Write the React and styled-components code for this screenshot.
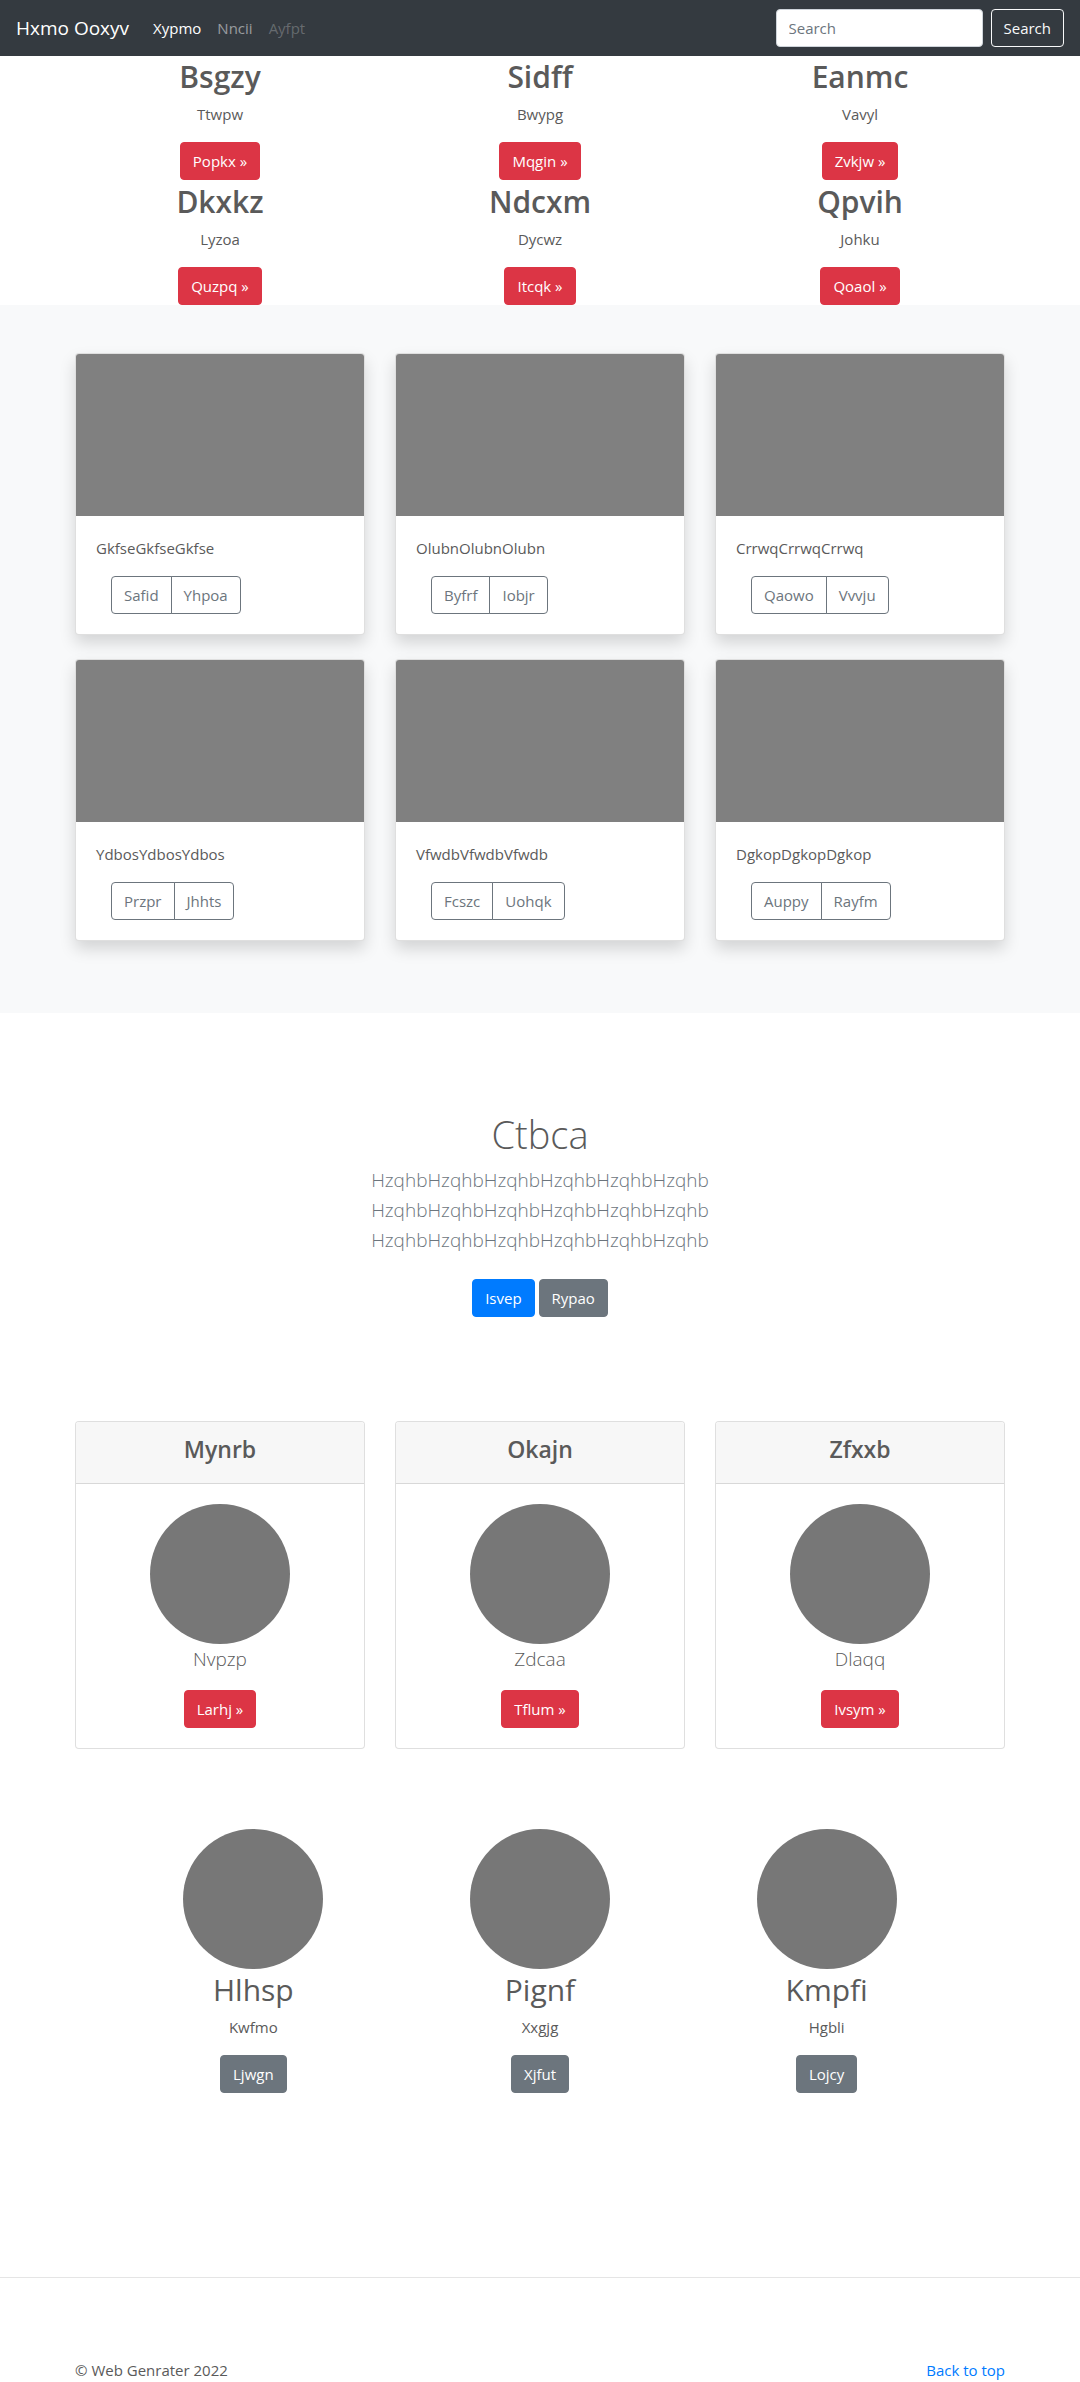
import React from "react";
import styled, { createGlobalStyle, css } from "styled-components";

const GlobalStyle = createGlobalStyle`
  *, *::before, *::after { box-sizing: border-box; }
  body {
    margin: 0;
    background: #fff;
    color: #5a5a5a;
    font-family: "Open Sans", "Noto Sans", sans-serif;
    font-size: 15px;
    line-height: 24px;
  }
  h1, h2, h3, p { margin: 0; }
  a { color: #007bff; text-decoration: none; }
`;

const tones = {
  danger: css`background: #dc3545; border-color: #dc3545; color: #fff;`,
  primary: css`background: #007bff; border-color: #007bff; color: #fff;`,
  secondary: css`background: #6c757d; border-color: #6c757d; color: #fff;`,
  outlineLight: css`background: transparent; border-color: #f8f9fa; color: #f8f9fa;`,
  outlineSecondary: css`background: transparent; border-color: #6c757d; color: #6c757d;`,
};

const buttonBase = css`
  display: inline-block;
  padding: 6px 12px;
  border: 1px solid transparent;
  border-radius: 4px;
  font: inherit;
  line-height: 24px;
  text-align: center;
  white-space: nowrap;
  cursor: pointer;
  ${({ $tone }) => tones[$tone]}
`;

const Button = styled.button`${buttonBase}`;
const ButtonLink = styled.a`${buttonBase}`;

const Navbar = styled.header`
  display: flex;
  align-items: center;
  justify-content: space-between;
  padding: 8px 16px;
  min-height: 56px;
  background: #343a40;
`;

const NavGroup = styled.nav`
  display: flex;
  align-items: center;
`;

const Brand = styled.a`
  margin-right: 16px;
  color: #fff;
  font-size: 19px;
  line-height: 30px;
`;

const NavLink = styled.a`
  padding: 8px;
  color: ${({ $state }) =>
    $state === "active" ? "#fff" : $state === "disabled" ? "rgba(255,255,255,.25)" : "rgba(255,255,255,.5)"};
`;

const SearchForm = styled.form`
  display: flex;
  align-items: center;
  gap: 8px;
`;

const SearchInput = styled.input`
  width: 207px;
  height: 38px;
  padding: 6px 12px;
  border: 1px solid #ced4da;
  border-radius: 4px;
  background: #fff;
  color: #495057;
  font: inherit;
  &::placeholder { color: #6c757d; opacity: 1; }
`;

const Container = styled.div`
  max-width: 960px;
  margin: 0 auto;
  padding: 0 ${({ $inset = 15 }) => $inset}px;
`;

const Columns = styled.div`
  display: grid;
  grid-template-columns: repeat(3, minmax(0, 1fr));
  gap: ${({ $gap = "0" }) => $gap};
`;

const Feature = styled.article`
  display: flex;
  flex-direction: column;
  align-items: center;
  text-align: center;
`;

const FeatureTitle = styled.h2`
  margin-bottom: 4px;
  font-size: 30px;
  font-weight: ${({ $weight }) => $weight};
  line-height: 42px;
`;

const Text = styled.p`
  margin-bottom: 16px;
`;

const Album = styled.section`
  padding: 48px 0 72px;
  background: #f8f9fa;
`;

const Card = styled.article`
  border: 1px solid rgba(0, 0, 0, 0.125);
  border-radius: 4px;
  background: #fff;
  overflow: hidden;
  box-shadow: ${({ $raised }) => ($raised ? "0 8px 16px rgba(0, 0, 0, 0.15)" : "none")};
`;

const CardImage = styled.div`
  aspect-ratio: 16 / 9;
  background: #808080;
`;

const CardBody = styled.div`
  padding: 20px;
`;

const ButtonGroup = styled.div`
  display: flex;
  padding-left: 15px;

  ${Button}:first-child {
    border-top-right-radius: 0;
    border-bottom-right-radius: 0;
  }
  ${Button}:last-child {
    margin-left: -1px;
    border-top-left-radius: 0;
    border-bottom-left-radius: 0;
  }
`;

const Hero = styled.section`
  display: flex;
  flex-direction: column;
  align-items: center;
  padding: 96px 15px 104px;
  text-align: center;
`;

const HeroTitle = styled.h1`
  margin-bottom: 6px;
  font-size: 38px;
  font-weight: 300;
  line-height: 50px;
`;

const Lead = styled.p`
  font-size: 19px;
  font-weight: 300;
  line-height: 30px;
  color: ${({ $muted }) => ($muted ? "#6c757d" : "inherit")};
`;

const HeroActions = styled.div`
  display: flex;
  gap: 4px;
  margin-top: 24px;
`;

const CardHeader = styled.header`
  padding: 12px 20px 18px;
  border-bottom: 1px solid rgba(0, 0, 0, 0.125);
  background: #f7f7f7;
  text-align: center;
`;

const CardTitle = styled.h3`
  font-size: 23px;
  font-weight: 600;
  line-height: 31px;
`;

const PlanBody = styled(CardBody)`
  display: flex;
  flex-direction: column;
  align-items: center;

  ${Lead} { margin-bottom: 16px; }
`;

const Avatar = styled.div`
  width: 140px;
  height: 140px;
  border-radius: 50%;
  background: #777;
`;

const Team = styled.section`
  padding: 80px 0 184px;
`;

const Footer = styled.footer`
  padding-top: 80px;
  border-top: 1px solid rgba(0, 0, 0, 0.1);
`;

const FooterRow = styled.div`
  display: flex;
  justify-content: space-between;
`;

const features = [
  ["Bsgzy", "Ttwpw", "Popkx"],
  ["Sidff", "Bwypg", "Mqgin"],
  ["Eanmc", "Vavyl", "Zvkjw"],
  ["Dkxkz", "Lyzoa", "Quzpq"],
  ["Ndcxm", "Dycwz", "Itcqk"],
  ["Qpvih", "Johku", "Qoaol"],
];

const albumCards = [
  ["GkfseGkfseGkfse", "Safid", "Yhpoa"],
  ["OlubnOlubnOlubn", "Byfrf", "Iobjr"],
  ["CrrwqCrrwqCrrwq", "Qaowo", "Vvvju"],
  ["YdbosYdbosYdbos", "Przpr", "Jhhts"],
  ["VfwdbVfwdbVfwdb", "Fcszc", "Uohqk"],
  ["DgkopDgkopDgkop", "Auppy", "Rayfm"],
];

const heroLines = Array(3).fill("HzqhbHzqhbHzqhbHzqhbHzqhbHzqhb");

const plans = [
  ["Mynrb", "Nvpzp", "Larhj"],
  ["Okajn", "Zdcaa", "Tflum"],
  ["Zfxxb", "Dlaqq", "Ivsym"],
];

const team = [
  ["Hlhsp", "Kwfmo", "Ljwgn"],
  ["Pignf", "Xxgjg", "Xjfut"],
  ["Kmpfi", "Hgbli", "Lojcy"],
];

export default function App() {
  return (
    <>
      <GlobalStyle />
      <Navbar id="top">
        <NavGroup>
          <Brand href="#">Hxmo Ooxyv</Brand>
          <NavLink href="#" $state="active">Xypmo</NavLink>
          <NavLink href="#">Nncii</NavLink>
          <NavLink href="#" $state="disabled" aria-disabled="true">Ayfpt</NavLink>
        </NavGroup>
        <SearchForm onSubmit={(e) => e.preventDefault()}>
          <SearchInput type="search" placeholder="Search" aria-label="Search" />
          <Button type="submit" $tone="outlineLight">Search</Button>
        </SearchForm>
      </Navbar>

      <main>
        <Container $inset={0}>
          <Columns $gap="1px 0">
            {features.map(([title, text, action]) => (
              <Feature key={title}>
                <FeatureTitle $weight={600}>{title}</FeatureTitle>
                <Text>{text}</Text>
                <ButtonLink href="#" $tone="danger">{action} »</ButtonLink>
              </Feature>
            ))}
          </Columns>
        </Container>

        <Album>
          <Container>
            <Columns $gap="24px 30px">
              {albumCards.map(([text, first, second]) => (
                <Card key={text} $raised>
                  <CardImage />
                  <CardBody>
                    <Text>{text}</Text>
                    <ButtonGroup>
                      <Button type="button" $tone="outlineSecondary">{first}</Button>
                      <Button type="button" $tone="outlineSecondary">{second}</Button>
                    </ButtonGroup>
                  </CardBody>
                </Card>
              ))}
            </Columns>
          </Container>
        </Album>

        <Hero>
          <HeroTitle>Ctbca</HeroTitle>
          {heroLines.map((line, i) => (
            <Lead key={i} $muted>{line}</Lead>
          ))}
          <HeroActions>
            <ButtonLink href="#" $tone="primary">Isvep</ButtonLink>
            <ButtonLink href="#" $tone="secondary">Rypao</ButtonLink>
          </HeroActions>
        </Hero>

        <Container>
          <Columns $gap="30px">
            {plans.map(([title, text, action]) => (
              <Card key={title}>
                <CardHeader>
                  <CardTitle>{title}</CardTitle>
                </CardHeader>
                <PlanBody>
                  <Avatar />
                  <Lead>{text}</Lead>
                  <ButtonLink href="#" $tone="danger">{action} »</ButtonLink>
                </PlanBody>
              </Card>
            ))}
          </Columns>
        </Container>

        <Team>
          <Container $inset={50}>
            <Columns>
              {team.map(([name, text, action]) => (
                <Feature key={name}>
                  <Avatar />
                  <FeatureTitle $weight={400}>{name}</FeatureTitle>
                  <Text>{text}</Text>
                  <ButtonLink href="#" $tone="secondary">{action}</ButtonLink>
                </Feature>
              ))}
            </Columns>
          </Container>
        </Team>
      </main>

      <Footer>
        <Container>
          <FooterRow>
            <span>© Web Genrater 2022</span>
            <a href="#top">Back to top</a>
          </FooterRow>
        </Container>
      </Footer>
    </>
  );
}
